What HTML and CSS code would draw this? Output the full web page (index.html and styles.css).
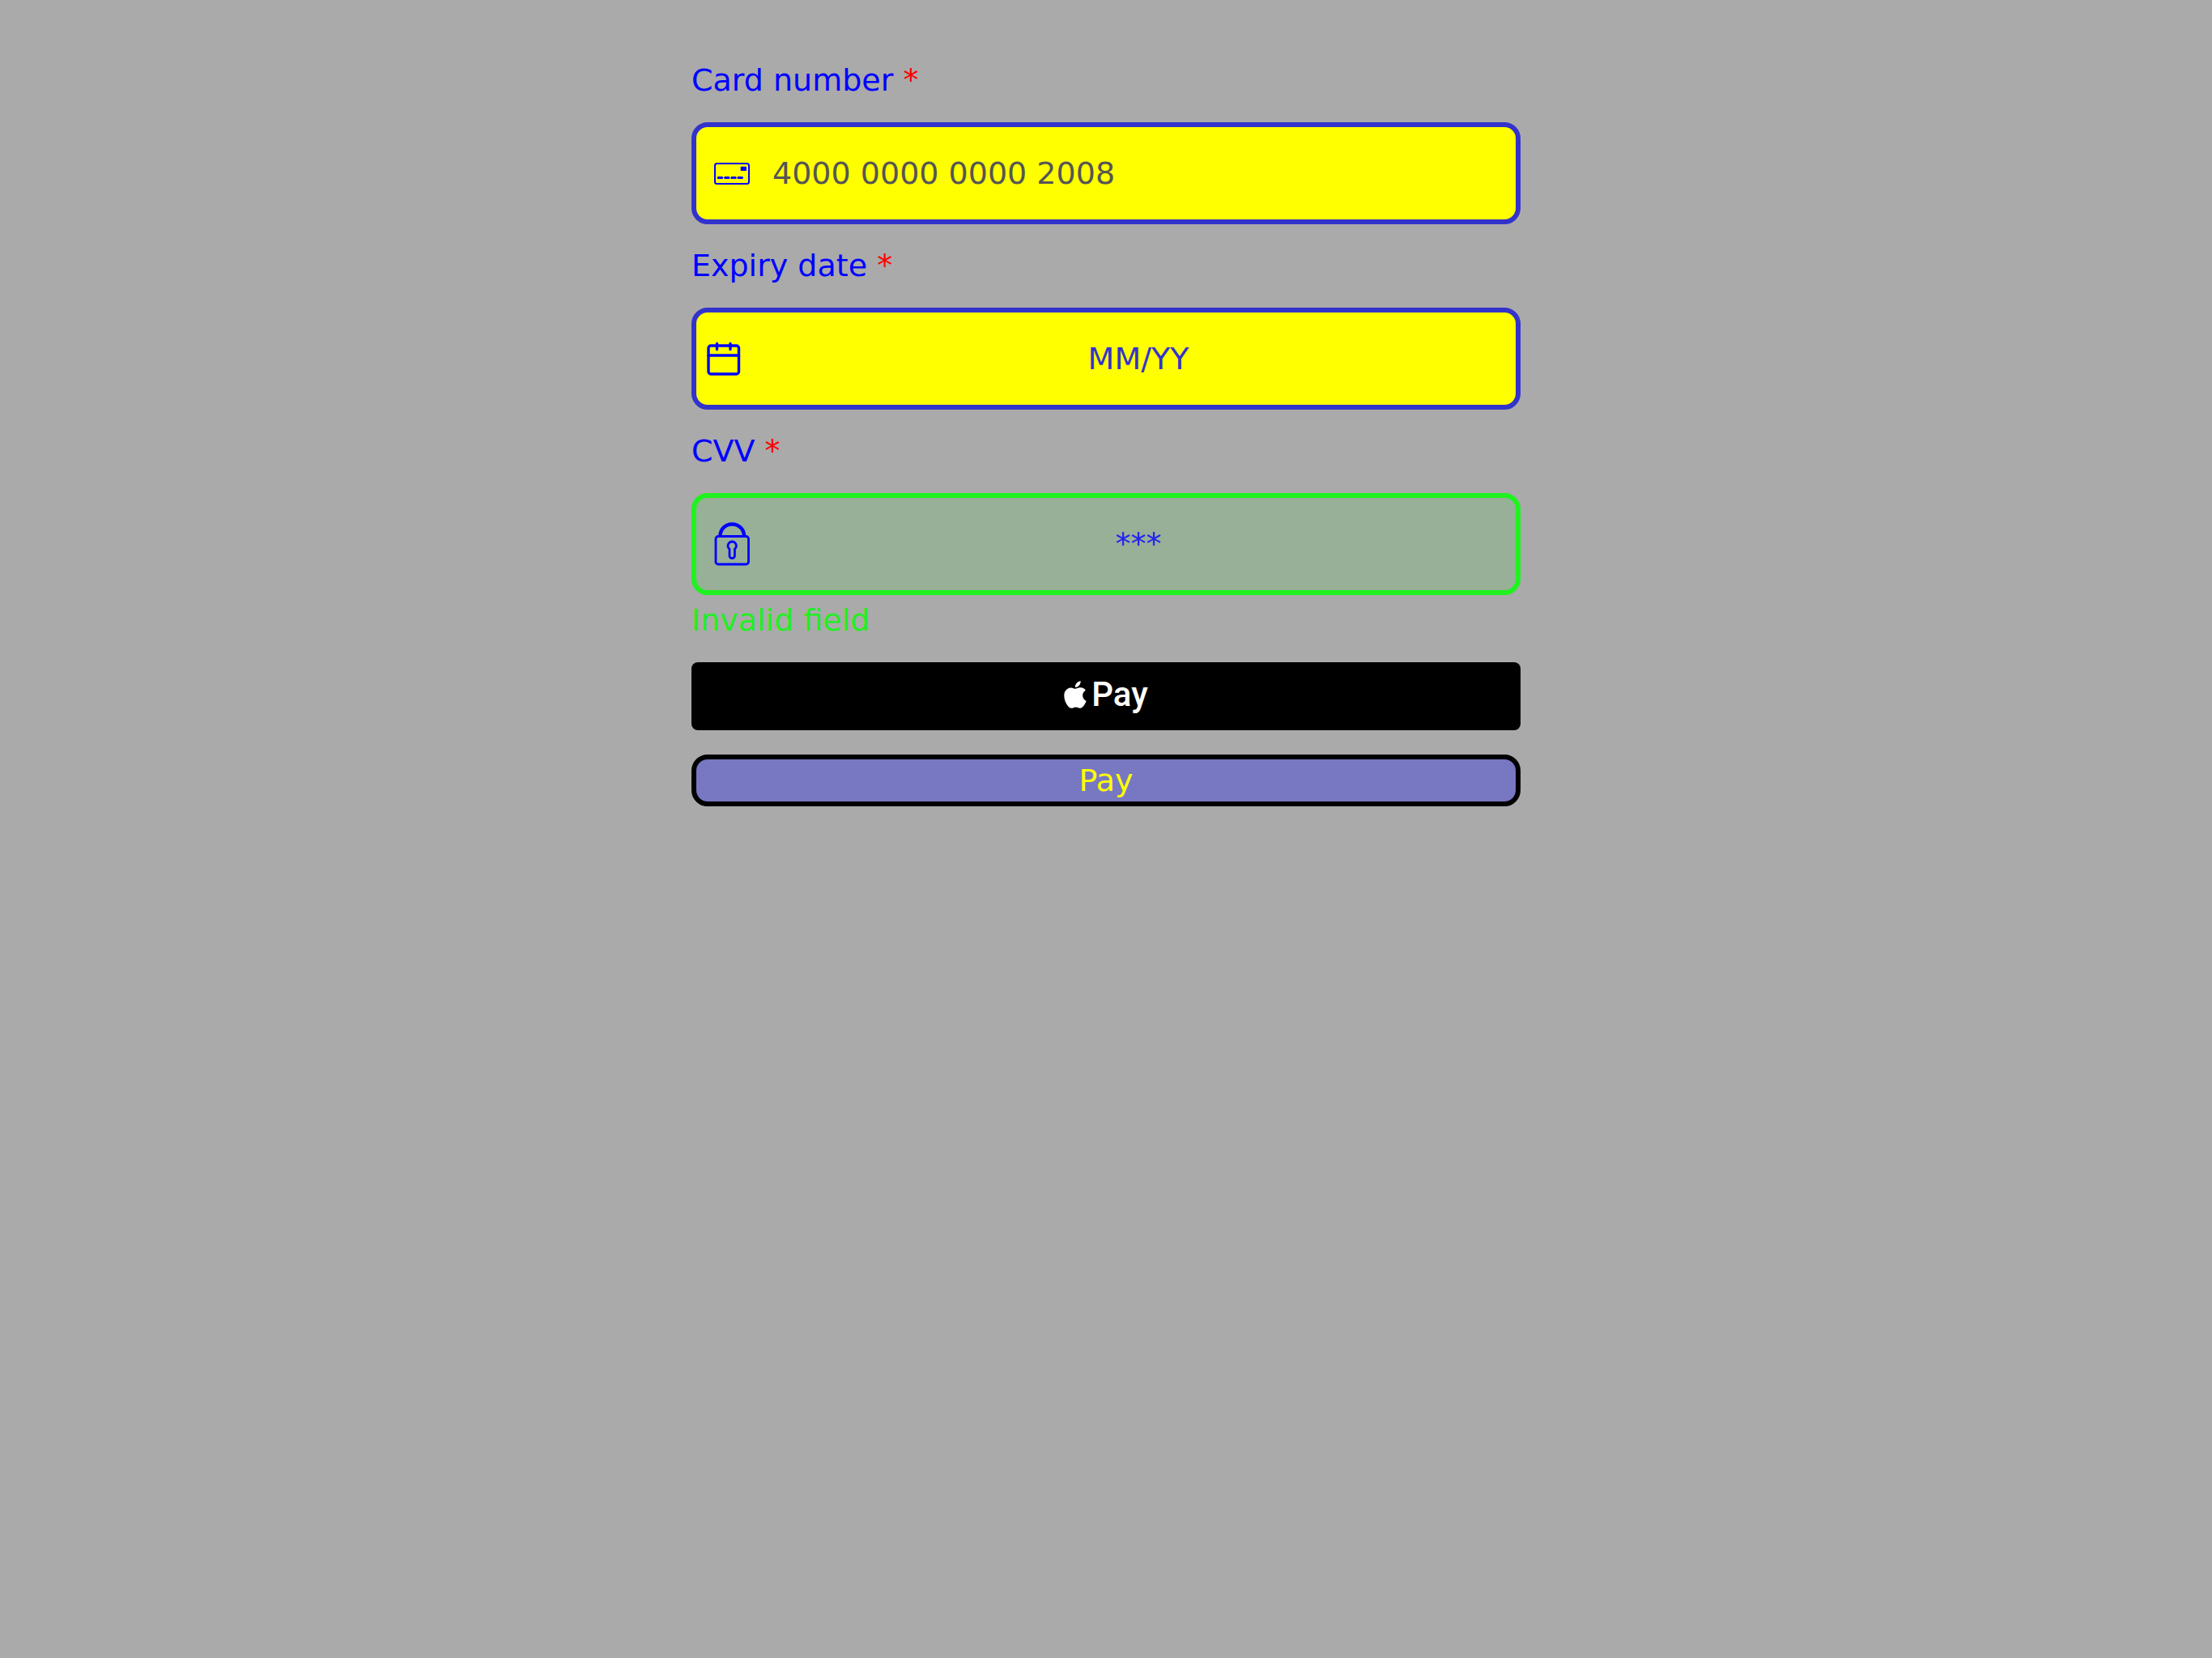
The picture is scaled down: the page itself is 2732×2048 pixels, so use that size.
FILE: index.html
```html
<!DOCTYPE html>
<html lang="en">
<head>
<meta charset="utf-8">
<meta name="viewport" content="width=device-width, initial-scale=1">
<title>Card payment</title>
<link rel="stylesheet" href="styles.css">
</head>
<body>
<main class="page">
  <form class="form" novalidate>
    <div class="field">
      <label class="label" for="card">Card number <span class="required">*</span></label>
      <div class="box">
        <svg class="icon" viewBox="0 0 64 64" aria-hidden="true">
          <rect x="13" y="20" width="42" height="25" rx="2.5" stroke-width="2"/>
          <rect class="solid" x="44.7" y="23.7" width="7.3" height="5.3" rx="0.8"/>
          <path d="M17.2 37.6h4.6M25.6 37.6h4.4M33.8 37.6h4.4M41.9 37.6h4.6" stroke-width="3" stroke-linecap="round"/>
        </svg>
        <input class="input input-card" id="card" type="text" inputmode="numeric" placeholder="4000 0000 0000 2008">
      </div>
    </div>
    <div class="field">
      <label class="label" for="expiry">Expiry date <span class="required">*</span></label>
      <div class="box">
        <svg class="icon" viewBox="0 0 64 64" aria-hidden="true">
          <rect x="5" y="16" width="37.5" height="35" rx="3" stroke-width="3.4"/>
          <path d="M5 28h37.5M15.5 13.5v7M32 13.5v7" stroke-width="3.4" stroke-linecap="round"/>
        </svg>
        <input class="input input-centered" id="expiry" type="text" inputmode="numeric" placeholder="MM/YY">
      </div>
    </div>
    <div class="field">
      <label class="label" for="cvv">CVV <span class="required">*</span></label>
      <div class="box box-invalid">
        <svg class="icon" viewBox="0 0 64 64" aria-hidden="true">
          <rect x="14" y="22.5" width="40.5" height="34.5" rx="3" stroke-width="2.8"/>
          <path d="M19.5 22C19.5 13.5 26 7.500 34.2 7.500S49 13.5 49 22" stroke-width="4.4"/>
          <path d="M31 38.3A5.2 5.2 0 1 1 37.4 38.3V46.5A3.2 3.2 0 0 1 31 46.5Z" stroke-width="2.8"/>
        </svg>
        <input class="input input-centered" id="cvv" type="text" inputmode="numeric" placeholder="***" aria-invalid="true" aria-describedby="cvv-error">
      </div>
      <p class="error" id="cvv-error">Invalid field</p>
    </div>
    <button class="apple-pay" type="button">
      <svg class="apple-logo" viewBox="2 0 20 24" aria-label="Apple" role="img">
        <path d="M12.152 6.896c-.948 0-2.415-1.078-3.96-1.04-2.04.027-3.91 1.183-4.961 3.014-2.117 3.675-.546 9.103 1.519 12.09 1.013 1.454 2.208 3.09 3.792 3.039 1.52-.065 2.09-.987 3.935-.987 1.831 0 2.35.987 3.96.948 1.637-.026 2.676-1.48 3.676-2.948 1.156-1.688 1.636-3.325 1.662-3.415-.039-.013-3.182-1.221-3.22-4.857-.026-3.04 2.48-4.494 2.597-4.559-1.429-2.09-3.623-2.324-4.39-2.376-2-.156-3.675 1.09-4.61 1.09zM15.53 3.83c.843-1.012 1.4-2.427 1.245-3.83-1.207.052-2.662.805-3.532 1.818-.78.896-1.454 2.338-1.273 3.714 1.338.104 2.715-.688 3.559-1.701"/>
      </svg>
      <span>Pay</span>
    </button>
    <button class="pay" type="submit">Pay</button>
  </form>
</main>
</body>
</html>
```

FILE: styles.css
```css
* {
  box-sizing: border-box;
}

body {
  margin: 0;
  background: #aaaaaa;
  color: #0000ff;
  font-family: "Bradley Hand", "DejaVu Sans", sans-serif;
  font-size: 38px;
  line-height: 47px;
}

.page {
  padding: 76px 16px;
}

.form {
  display: flex;
  flex-direction: column;
  gap: 30px;
  max-width: 1024px;
  margin: 0 auto;
}

.field + .field {
  margin-top: -2px;
}

.label {
  display: block;
  margin-bottom: 28px;
}

.required {
  color: #ff0000;
}

.box {
  display: flex;
  align-items: center;
  gap: 20px;
  padding: 24px 14px 24px 10px;
  border: 6px solid #3333cc;
  border-radius: 20px;
  background: #ffff00;
  color: #3333cc;
}

.box-invalid {
  border-color: #1ff21f;
  background: #98b098;
  color: #2222ee;
}

.icon {
  flex: none;
  width: 64px;
  height: 64px;
  fill: none;
  stroke: #0000ff;
}

.icon .solid {
  fill: #0000ff;
  stroke: none;
}

.input {
  flex: 1;
  min-width: 0;
  height: 66px;
  padding: 0;
  border: 0;
  outline: 0;
  background: transparent;
  color: inherit;
  font: inherit;
}

.input::placeholder {
  color: inherit;
  opacity: 1;
}

.input-card {
  color: #555555;
}

.input-centered {
  text-align: center;
}

.error {
  margin: 10px 0 0;
  color: #22ee22;
  line-height: 43px;
}

.apple-pay {
  display: flex;
  align-items: center;
  justify-content: center;
  gap: 6px;
  height: 84px;
  padding: 0 0 4px;
  border: 0;
  border-radius: 8px;
  background: #000000;
  color: #ffffff;
  font: 500 42px/48px Roboto, sans-serif;
}

.apple-logo {
  width: 28px;
  height: 34px;
  fill: #ffffff;
}

.pay {
  height: 64px;
  padding: 0;
  border: 6px solid #000000;
  border-radius: 20px;
  background: #7777c2;
  color: #ffff00;
  font: inherit;
}
```
